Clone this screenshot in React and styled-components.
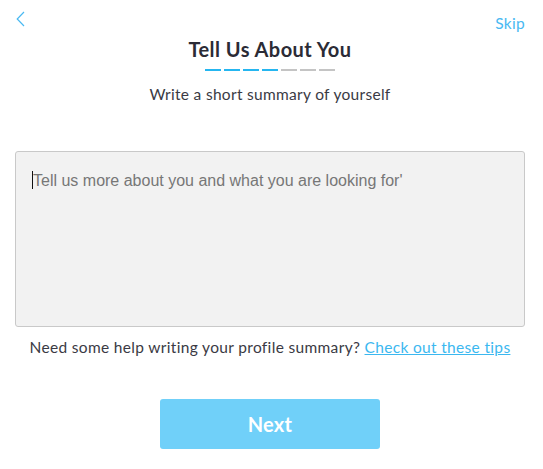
import React from "react"
import styled, { createGlobalStyle } from "styled-components"

const Global = createGlobalStyle`
  html, body {
    margin: 0;
    padding: 0;
    background: #ffffff;
  }
  body {
    font-family: 'Lato', 'Noto Sans', sans-serif;
    color: #2f2f3a;
  }
`

const Page = styled.div`
  width: 543px;
  height: 469px;
  padding: 0 18px 0 15px;
  box-sizing: border-box;
  display: flex;
  flex-direction: column;
  align-items: center;
`

const TopBar = styled.div`
  width: 100%;
  height: 36px;
  display: flex;
  justify-content: space-between;
  align-items: flex-start;
`

const BackButton = styled.button`
  border: none;
  background: none;
  padding: 0;
  margin: 11px 0 0 1px;
  cursor: pointer;
  display: flex;
`

const SkipLink = styled.a`
  margin-top: 13px;
  font-size: 15.5px;
  line-height: 20px;
  letter-spacing: 0.3px;
  color: #49b9f2;
  text-decoration: none;
  cursor: pointer;
`

const Title = styled.h1`
  margin: 0;
  font-size: 20px;
  line-height: 26px;
  font-weight: 700;
  letter-spacing: 0.45px;
  color: #2b2b36;
`

const Progress = styled.div`
  display: flex;
  gap: 3px;
  margin-top: 7px;
`

const Dash = styled.span`
  width: 16px;
  height: 2px;
  background: ${p => (p.$done ? "#25b6f0" : "#c4c4c4")};
`

const Subtitle = styled.p`
  margin: 13px 0 0;
  font-size: 15.5px;
  line-height: 20px;
  letter-spacing: 0.3px;
  color: #3a3a44;
`

const Field = styled.div`
  position: relative;
  margin-top: 47px;
  align-self: flex-start;
`

const Summary = styled.textarea`
  display: block;
  width: 510px;
  height: 176px;
  box-sizing: border-box;
  background: #f2f2f2;
  border: 1px solid #c9c9c9;
  border-radius: 3px;
  padding: 19px 17px;
  resize: none;
  font-family: 'Liberation Sans', Arial, sans-serif;
  font-size: 16px;
  line-height: 20px;
  color: #333;
  outline: none;

  &::placeholder {
    color: #777777;
  }
`

const Caret = styled.span`
  position: absolute;
  left: 17px;
  top: 20px;
  width: 1px;
  height: 18px;
  background: #111;
`

const Help = styled.p`
  margin: 10px 0 0;
  font-size: 15.5px;
  line-height: 20px;
  letter-spacing: 0.33px;
  color: #3a3a44;
`

const TipsLink = styled.a`
  color: #3bb8f0;
  text-decoration: underline;
  cursor: pointer;
`

const NextButton = styled.button`
  margin-top: 42px;
  width: 220px;
  height: 50px;
  border: none;
  border-radius: 3px;
  background: #70d0f9;
  color: #ffffff;
  font-family: 'Lato', 'Noto Sans', sans-serif;
  font-size: 20px;
  font-weight: 700;
  letter-spacing: 0.3px;
  cursor: pointer;
`

const steps = [true, true, true, true, false, false, false]

const App = () => {
  return (
    <>
      <Global />
      <Page>
        <TopBar>
          <BackButton aria-label="Back">
            <svg width="9" height="16" viewBox="0 0 9 16" fill="none">
              <path d="M8 1 L1.2 8 L8 15" stroke="#49b9f2" strokeWidth="1.2" />
            </svg>
          </BackButton>
          <SkipLink>Skip</SkipLink>
        </TopBar>
        <Title>Tell Us About You</Title>
        <Progress>
          {steps.map((done, i) => (
            <Dash key={i} $done={done} />
          ))}
        </Progress>
        <Subtitle>Write a short summary of yourself</Subtitle>
        <Field>
          <Summary placeholder="Tell us more about you and what you are looking for'" />
          <Caret />
        </Field>
        <Help>
          Need some help writing your profile summary? <TipsLink>Check out these tips</TipsLink>
        </Help>
        <NextButton>Next</NextButton>
      </Page>
    </>
  )
}

export default App
